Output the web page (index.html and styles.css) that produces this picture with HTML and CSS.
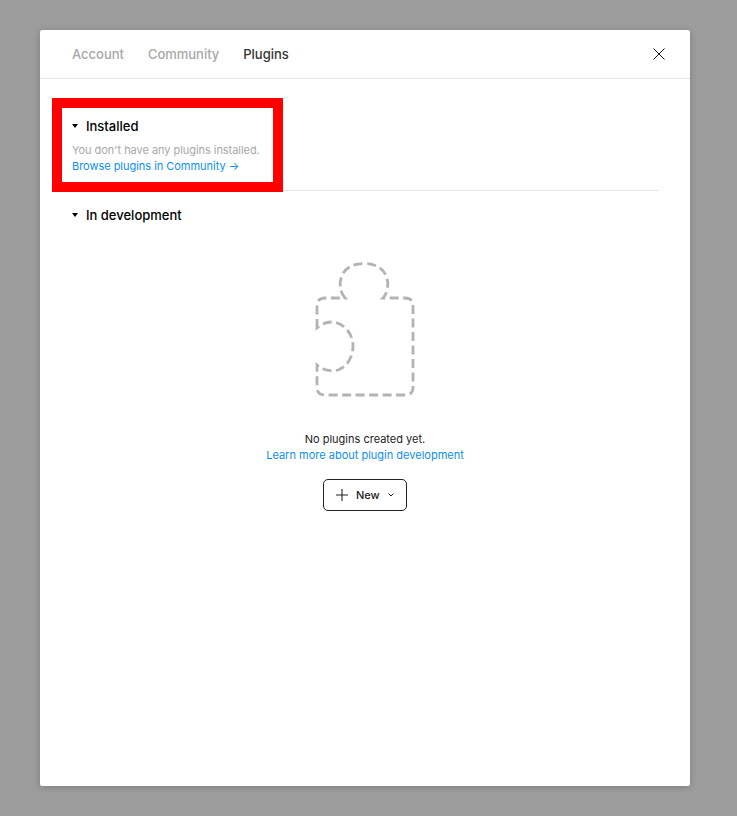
FILE: index.html
```html
<!DOCTYPE html>
<html lang="en">
<head>
<meta charset="utf-8">
<title>Plugins</title>
<link rel="stylesheet" href="styles.css">
</head>
<body>
<div class="modal">
  <header class="tabs">
    <span class="tab">Account</span>
    <span class="tab">Community</span>
    <span class="tab active">Plugins</span>
    <svg class="close" width="14" height="14" viewBox="0 0 14 14"><path d="M1.500 1.500l11 11M12.500 1.500l-11 11" stroke="#111" stroke-width="1" fill="none"/></svg>
  </header>
  <div class="content">
    <section class="installed">
      <div class="highlight"></div>
      <h2 class="section-title"><svg class="caret" width="6" height="4" viewBox="0 0 6 4"><path d="M0 0h6L3 4z" fill="#000"/></svg>Installed</h2>
      <p class="muted">You don't have any plugins installed.</p>
      <a class="link tight">Browse plugins in Community →</a>
    </section>
    <section class="development">
      <h2 class="section-title"><svg class="caret" width="6" height="4" viewBox="0 0 6 4"><path d="M0 0h6L3 4z" fill="#000"/></svg>In development</h2>
      <div class="empty">
        <svg class="puzzle" width="100" height="136" viewBox="315 262 100 136">
          <path d="M317 328V306Q317 298 325 298H345C336 288 338 263.500 364 263.500C390 263.500 392 288 383 298H405Q413 298 413 306V387Q413 395 405 395H325Q317 395 317 387V365C325 372 333 371 338 370C347 367 353 357 353 346C353 333 343 322 331 322C325 322 321 325 317 328Z" fill="none" stroke="#b3b3b3" stroke-width="2.8" stroke-dasharray="9 4.500"/>
        </svg>
        <p class="empty-text">No plugins created yet.</p>
        <a class="link">Learn more about plugin development</a>
        <button class="new-btn">
          <svg width="12" height="12" viewBox="0 0 12 12"><path d="M6 0v12M0 6h12" stroke="#222" stroke-width="1.1" fill="none"/></svg>
          <span>New</span>
          <svg width="6" height="4" viewBox="0 0 6 4"><path d="M.5.5L3 3 5.500.5" stroke="#222" stroke-width="1" fill="none"/></svg>
        </button>
      </div>
    </section>
  </div>
</div>
</body>
</html>
```

FILE: styles.css
```css
* { box-sizing: border-box; }
html, body { margin: 0; height: 100%; }
body {
  background: #9c9c9c;
  padding: 30px 47px 30px 40px;
  font-family: Inter, "Liberation Sans", sans-serif;
  color: #000;
}
.modal {
  width: 650px;
  height: 756px;
  background: #fff;
  border-radius: 2px;
  box-shadow: 0 1px 6px rgba(0, 0, 0, .2);
}
.tabs {
  display: flex;
  align-items: center;
  gap: 24px;
  height: 49px;
  padding: 0 24px 0 32px;
  border-bottom: 1px solid #e5e5e5;
}
.tab { font-size: 13px; font-weight: 500; color: #a8a8a8; letter-spacing: -.02px; }
.tab.active { color: #333; }
.close { margin-left: auto; }
.content { padding: 0 32px 0 22px; }
.installed {
  position: relative;
  height: 112px;
  padding: 38px 0 0 10px;
  border-bottom: 1px solid #e5e5e5;
}
.highlight {
  position: absolute;
  left: -10px;
  top: 19px;
  width: 231px;
  height: 94px;
  border: 10px solid #f00;
}
.section-title {
  display: flex;
  align-items: center;
  gap: 8px;
  margin: 0;
  height: 18px;
  font-size: 13px;
  font-weight: 500;
  color: #000;
}
.muted {
  margin: 7px 0 0;
  font-size: 11px;
  line-height: 16px;
  letter-spacing: -.05px;
  color: #a8a8a8;
}
.link {
  display: block;
  font-size: 11px;
  line-height: 16px;
  color: #0d8fee;
}
.link.tight { letter-spacing: -.03px; }
.development { padding: 15px 0 0 10px; }
.empty {
  display: flex;
  flex-direction: column;
  align-items: center;
  margin-left: -10px;
  padding-left: 10px;
}
.puzzle { margin-top: 38px; }
.empty-text {
  margin: 33px 0 0;
  font-size: 11px;
  line-height: 16px;
  color: #222;
}
.new-btn {
  display: flex;
  align-items: center;
  gap: 8px;
  width: 84px;
  height: 32px;
  margin-top: 16px;
  padding: 0 0 0 12px;
  background: #fff;
  border: 1px solid #222;
  border-radius: 5px;
  font: 450 11px Inter, "Liberation Sans", sans-serif;
  color: #222;
}
```
